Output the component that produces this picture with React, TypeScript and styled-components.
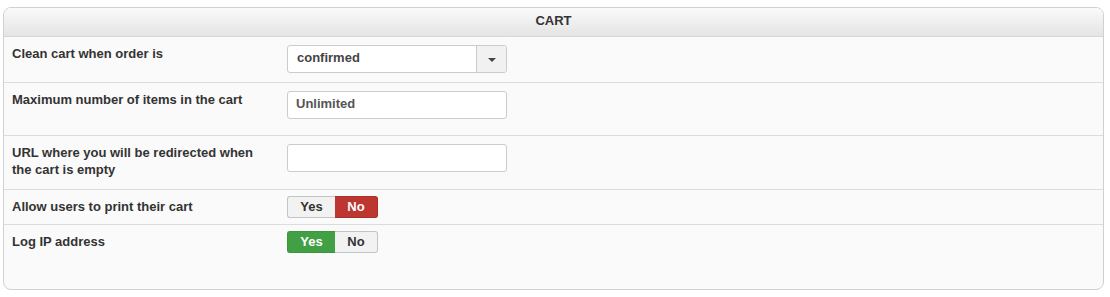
import React from 'react'
import styled, { createGlobalStyle } from 'styled-components'

const GlobalStyle = createGlobalStyle`
  body {
    margin: 0;
    background: #fff;
    font-family: "Liberation Sans", Arial, sans-serif;
    font-size: 13px;
    color: #333;
  }
`

const Page = styled.div`
  padding: 7px 6px 7px 3px;
`

const Panel = styled.div`
  border: 1px solid #d0d0d0;
  border-radius: 8px;
  background: #fafafa;
  overflow: hidden;
  height: 283px;
  box-sizing: border-box;
`

const Header = styled.div`
  height: 29px;
  line-height: 26px;
  text-align: center;
  font-weight: bold;
  font-size: 13px;
  color: #333;
  background: linear-gradient(#fafafa, #e4e4e4);
  border-bottom: 1px solid #d6d6d6;
  box-sizing: border-box;
`

const Row = styled.div<{ $last?: boolean }>`
  display: grid;
  grid-template-columns: 275px 1fr;
  padding: 8px 0 ${(p) => (p.$last ? 0 : 8)}px 8px;
  border-bottom: ${(p) => (p.$last ? 'none' : '1px solid #dcdcdc')};
`

const Label = styled.div`
  font-weight: bold;
  font-size: 13px;
  line-height: 17px;
  color: #333;
  padding-right: 12px;
`

const Field = styled.div<{ $gap?: number }>`
  padding-bottom: ${(p) => p.$gap ?? 0}px;
`

const TextInput = styled.div`
  width: 220px;
  height: 28px;
  box-sizing: border-box;
  border: 1px solid #ccc;
  border-radius: 3px;
  background: #fff;
  padding: 0 8px;
  line-height: 24px;
  font-weight: bold;
  color: #555;
`

const Select = styled.div`
  width: 220px;
  height: 28px;
  box-sizing: border-box;
  border: 1px solid #ccc;
  border-radius: 3px;
  background: #fff;
  display: flex;
  font-weight: bold;
  color: #444;
`

const SelectValue = styled.div`
  flex: 1;
  padding: 0 9px;
  line-height: 24px;
`

const SelectArrow = styled.div`
  width: 29px;
  border-left: 1px solid #ccc;
  background: #f1f1f1;
  display: flex;
  align-items: center;
  justify-content: center;
  border-radius: 0 3px 3px 0;
`

const Caret = styled.span`
  width: 0;
  height: 0;
  border-left: 4px solid transparent;
  border-right: 4px solid transparent;
  border-top: 4px solid #444;
  margin-top: 1px;
`

const Toggle = styled.div`
  display: inline-flex;
  height: 22px;
  margin: -2px 0;
`

const ToggleBtn = styled.div<{ $active?: 'yes' | 'no'; $side: 'left' | 'right' }>`
  box-sizing: border-box;
  width: ${(p) => (p.$side === 'left' ? 48 : 43)}px;
  height: 22px;
  line-height: 20px;
  text-align: center;
  font-weight: bold;
  font-size: 13px;
  border: 1px solid
    ${(p) => (p.$active === 'yes' ? '#3c963c' : p.$active === 'no' ? '#a83229' : '#c4c4c4')};
  ${(p) => (p.$side === 'left' ? 'border-right: none;' : 'border-left: none;')}
  border-radius: ${(p) => (p.$side === 'left' ? '3px 0 0 3px' : '0 3px 3px 0')};
  background: ${(p) =>
    p.$active === 'yes' ? '#41a043' : p.$active === 'no' ? '#bd3631' : '#f2f2f2'};
  color: ${(p) => (p.$active ? '#fff' : '#333')};
`

function YesNo({ value }: { value: 'yes' | 'no' }) {
  return (
    <Toggle>
      <ToggleBtn $side="left" $active={value === 'yes' ? 'yes' : undefined}>Yes</ToggleBtn>
      <ToggleBtn $side="right" $active={value === 'no' ? 'no' : undefined}>No</ToggleBtn>
    </Toggle>
  )
}

export default function App() {
  return (
    <Page>
      <GlobalStyle />
      <Panel>
        <Header>CART</Header>
        <Row>
          <Label>Clean cart when order is</Label>
          <Field $gap={1}>
            <Select>
              <SelectValue>confirmed</SelectValue>
              <SelectArrow><Caret /></SelectArrow>
            </Select>
          </Field>
        </Row>
        <Row>
          <Label>Maximum number of items in the cart</Label>
          <Field $gap={8}>
            <TextInput>Unlimited</TextInput>
          </Field>
        </Row>
        <Row>
          <Label>URL where you will be redirected when the cart is empty</Label>
          <Field $gap={9}>
            <TextInput />
          </Field>
        </Row>
        <Row>
          <Label>Allow users to print their cart</Label>
          <Field>
            <YesNo value="no" />
          </Field>
        </Row>
        <Row $last>
          <Label>Log IP address</Label>
          <Field>
            <YesNo value="yes" />
          </Field>
        </Row>
      </Panel>
    </Page>
  )
}
